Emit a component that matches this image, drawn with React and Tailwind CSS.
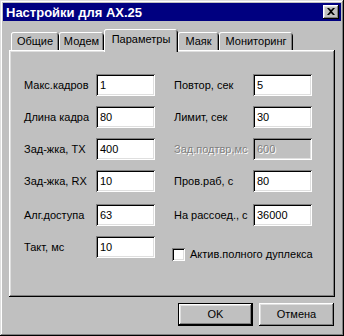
import React from 'react';

const RAISED = 'shadow-[inset_-1px_-1px_#000,inset_1px_1px_#fff,inset_-2px_-2px_#808080,inset_2px_2px_#dfdfdf]';
const SUNKEN = 'shadow-[inset_1px_1px_#808080,inset_-1px_-1px_#fff,inset_2px_2px_#000,inset_-2px_-2px_#dfdfdf]';

const TABS = [
  { label: 'Общие', w: 'w-[48px]' },
  { label: 'Модем', w: 'w-[45px]' },
  { label: 'Параметры', w: 'w-[74px]', active: true },
  { label: 'Маяк', w: 'w-[41px]' },
  { label: 'Мониторинг', w: 'w-[74px]' },
];

const LEFT = [
  ['Макс.кадров', '1'],
  ['Длина кадра', '80'],
  ['Зад-жка, TX', '400'],
  ['Зад-жка, RX', '10'],
  ['Алг.доступа', '63'],
  ['Такт, мс', '10'],
];

const RIGHT = [
  ['Повтор, сек', '5'],
  ['Лимит, сек', '30'],
  ['Зад.подтвр,мс', '600', true],
  ['Пров.раб, с', '80'],
  ['На рассоед., с', '36000'],
];

function Field({ label, value, labelW, disabled, extra = '' }) {
  return (
    <div className={`flex items-center h-[22px] ${extra}`}>
      <span
        className={`${labelW} whitespace-nowrap ${disabled ? 'text-[#808080] [text-shadow:1px_1px_0_#fff]' : 'text-black'}`}
      >
        {label}
      </span>
      <div
        className={`w-[59px] h-[22px] pl-[4px] flex items-center ${SUNKEN} ${disabled ? 'bg-[#c0c0c0] text-[#808080] [text-shadow:1px_1px_0_#fff]' : 'bg-white text-black'}`}
      >
        {value}
      </div>
    </div>
  );
}

export default function App() {
  return (
    <div
      className={`w-[344px] h-[336px] bg-[#c0c0c0] p-[3px] flex flex-col text-[11px] leading-none shadow-[inset_-1px_-1px_#000,inset_1px_1px_#dfdfdf,inset_-2px_-2px_#808080,inset_2px_2px_#fff]`}
      style={{ fontFamily: '"Liberation Sans", Arial, sans-serif' }}
    >
      {/* Title bar */}
      <div className="h-[18px] bg-[#000080] flex items-center justify-between pl-[3px] pr-[2px]">
        <span className="text-white font-bold text-[13px]">Настройки для AX.25</span>
        <div className={`w-[16px] h-[14px] bg-[#c0c0c0] flex items-center justify-center ${RAISED}`}>
          <svg width="8" height="7" viewBox="0 0 8 7" className="-mt-[1px]">
            <path d="M0 0h2l2 2 2-2h2L5 3.5 8 7H6L4 5 2 7H0l3-3.5z" fill="#000" />
          </svg>
        </div>
      </div>

      <div className="mt-[8px] pl-[6px] pr-[6px]">
        {/* Tabs */}
        <div className="flex items-end h-[21px] pl-[2px]">
          {TABS.map(t => (
            <div
              key={t.label}
              className={`${t.w} flex items-center justify-center bg-[#c0c0c0] rounded-t-[3px] shadow-[inset_1px_0_#fff,inset_0_1px_#fff,inset_-1px_0_#000,inset_-2px_0_#808080]
                ${t.active ? 'h-[23px] -mb-[2px] relative z-10 pb-[2px]' : 'h-[18px]'}`}
            >
              {t.label}
            </div>
          ))}
        </div>

        {/* Panel */}
        <div className="h-[247px] pt-[24px] pl-[15px] flex gap-[19px] shadow-[inset_-1px_-1px_#000,inset_1px_1px_#fff,inset_-2px_-2px_#808080,inset_2px_2px_#dfdfdf]">
          <div className="flex flex-col gap-[10px]">
            {LEFT.map(([l, v], i) => (
              <Field key={l} label={l} value={v} labelW="w-[72px]" extra={i === 4 ? 'mt-[2px]' : ''} />
            ))}
          </div>
          <div className="flex flex-col gap-[10px]">
            {RIGHT.map(([l, v, d], i) => (
              <Field key={l} label={l} value={v} disabled={d} labelW="w-[79px]" extra={i === 4 ? 'mt-[2px]' : ''} />
            ))}
            <div className="flex items-center -ml-[2px] mt-[12px]">
              <div className={`w-[13px] h-[13px] bg-white ${SUNKEN}`} />
              <span className="ml-[5px]">Актив.полного дуплекса</span>
            </div>
          </div>
        </div>

        {/* Buttons */}
        <div className="flex justify-end gap-[6px] mt-[6px] pr-[1px]">
          <div className="w-[75px] h-[23px] border border-black">
            <div className={`w-full h-full flex items-center justify-center ${RAISED}`}>OK</div>
          </div>
          <div className={`w-[75px] h-[23px] flex items-center justify-center ${RAISED}`}>Отмена</div>
        </div>
      </div>
    </div>
  );
}
